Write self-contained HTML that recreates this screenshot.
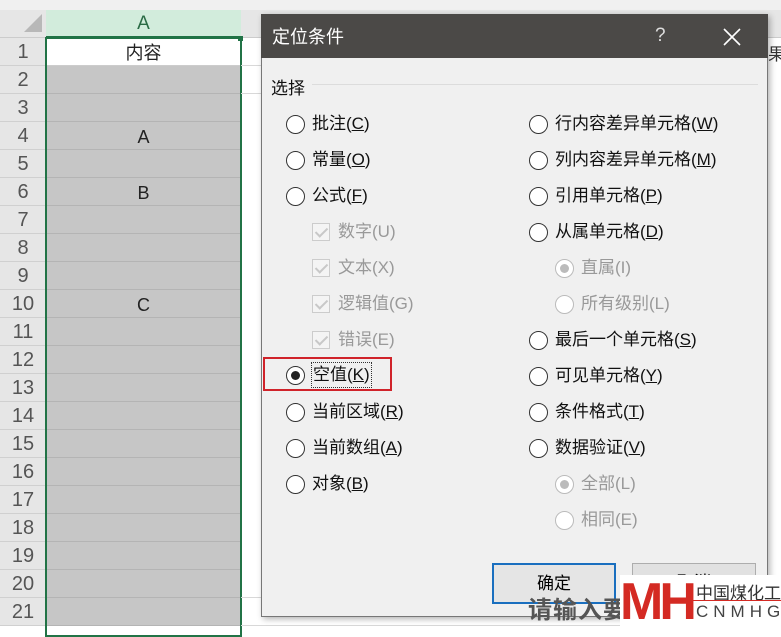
<!DOCTYPE html>
<html><head><meta charset="utf-8"><style>
*{margin:0;padding:0;box-sizing:border-box}
body{width:781px;height:628px;overflow:hidden;background:#fff;position:relative;font-family:"Liberation Sans","Microsoft YaHei","Noto Sans CJK SC",sans-serif}
.a{position:absolute}
.rh{position:absolute;left:0;width:46px;height:28px;background:#e6e6e6;border-bottom:1px solid #d0d0d0;color:#555;font-size:20px;text-align:center;line-height:29px}
.cell{position:absolute;left:46px;width:195px;height:28px;background:#c6c6c6;border-bottom:1px solid #b4b4b4;font-size:18px;text-align:center;line-height:30px;color:#222}
.gl{position:absolute;left:241px;width:540px;height:1px;background:#d8d8d8}
.opt{position:absolute;font-size:17px;color:#111;height:24px;line-height:24px;white-space:nowrap}
.opt i{position:absolute;left:0;top:3px;width:19px;height:19px;border:1px solid #333;border-radius:50%;background:#fff}
.opt span{position:absolute;left:26px;top:0}
.dis{color:#999}
.dis i{border-color:#bbb}
.chk{position:absolute;left:0;top:3px;width:18px;height:18px;border:1px solid #ccc;background:#f4f4f4}
.chk:after{content:"";position:absolute;left:5px;top:1px;width:5px;height:10px;border:solid #c8c8c8;border-width:0 2px 2px 0;transform:rotate(45deg)}
u{text-decoration:underline}
</style></head><body>
<div class="a" style="left:0;top:0;width:781px;height:38px;background:#e6e6e6;border-bottom:1px solid #ccc"></div>
<div class="a" style="left:46px;top:10px;width:195px;height:28px;background:#d2ecdc;color:#2a6b45;font-size:19px;text-align:center;line-height:28px;border-bottom:2px solid #217346">A</div>
<div class="a" style="left:0;top:0;width:781px;height:10px;background:#f0f0f0"></div>
<div class="a" style="left:24px;top:14px;width:0;height:0;border-left:18px solid transparent;border-bottom:18px solid #b8b8b8"></div>
<div class="rh" style="top:38px">1</div><div class="rh" style="top:66px">2</div><div class="rh" style="top:94px">3</div><div class="rh" style="top:122px">4</div><div class="rh" style="top:150px">5</div><div class="rh" style="top:178px">6</div><div class="rh" style="top:206px">7</div><div class="rh" style="top:234px">8</div><div class="rh" style="top:262px">9</div><div class="rh" style="top:290px">10</div><div class="rh" style="top:318px">11</div><div class="rh" style="top:346px">12</div><div class="rh" style="top:374px">13</div><div class="rh" style="top:402px">14</div><div class="rh" style="top:430px">15</div><div class="rh" style="top:458px">16</div><div class="rh" style="top:486px">17</div><div class="rh" style="top:514px">18</div><div class="rh" style="top:542px">19</div><div class="rh" style="top:570px">20</div><div class="rh" style="top:598px">21</div>
<div class="cell" style="top:38px;background:#fff;border-bottom:1px solid #ccc">内容</div>
<div class="cell" style="top:66px"></div><div class="cell" style="top:94px"></div><div class="cell" style="top:122px">A</div><div class="cell" style="top:150px"></div><div class="cell" style="top:178px">B</div><div class="cell" style="top:206px"></div><div class="cell" style="top:234px"></div><div class="cell" style="top:262px"></div><div class="cell" style="top:290px">C</div><div class="cell" style="top:318px"></div><div class="cell" style="top:346px"></div><div class="cell" style="top:374px"></div><div class="cell" style="top:402px"></div><div class="cell" style="top:430px"></div><div class="cell" style="top:458px"></div><div class="cell" style="top:486px"></div><div class="cell" style="top:514px"></div><div class="cell" style="top:542px"></div><div class="cell" style="top:570px"></div><div class="cell" style="top:598px"></div>
<div class="a" style="left:45px;top:37px;width:197px;height:600px;border:2px solid #217346"></div>
<div class="a" style="left:238px;top:36px;width:5px;height:5px;background:#217346"></div>
<div class="gl" style="top:65px"></div><div class="gl" style="top:93px"></div><div class="gl" style="top:597px"></div><div class="gl" style="top:625px"></div>
<div class="a" style="left:768px;top:38px;width:13px;height:590px;background:#fff"></div>
<div class="a" style="left:768px;top:40px;font-size:17px;color:#333">果</div>
<!-- dialog -->
<div class="a" style="left:261px;top:14px;width:507px;height:603px;background:#f0f0f0;border:1px solid #777;box-shadow:2px 2px 6px rgba(0,0,0,.3)"></div>
<div class="a" style="left:261px;top:14px;width:507px;height:44px;background:#4b4947;color:#fff;font-size:18px;line-height:46px;padding-left:11px">定位条件</div>
<div class="a" style="left:655px;top:25px;color:#ddd;font-size:19px">?</div>
<svg class="a" style="left:722px;top:27px" width="20" height="20"><path d="M2 2L18 18M18 2L2 18" stroke="#fff" stroke-width="1.6"/></svg>
<div class="a" style="left:271px;top:74px;font-size:17px;color:#111">选择</div>
<div class="a" style="left:312px;top:84px;width:446px;height:1px;background:#dcdcdc"></div>

<div class="opt" style="left:286px;top:112px"><i></i><span>批注(<u>C</u>)</span></div>
<div class="opt" style="left:286px;top:148px"><i></i><span>常量(<u>O</u>)</span></div>
<div class="opt" style="left:286px;top:184px"><i></i><span>公式(<u>F</u>)</span></div>
<div class="opt dis" style="left:312px;top:220px"><b class="chk"></b><span>数字(U)</span></div>
<div class="opt dis" style="left:312px;top:256px"><b class="chk"></b><span>文本(X)</span></div>
<div class="opt dis" style="left:312px;top:292px"><b class="chk"></b><span>逻辑值(G)</span></div>
<div class="opt dis" style="left:312px;top:328px"><b class="chk"></b><span>错误(E)</span></div>
<div class="a" style="left:263px;top:357px;width:129px;height:34px;border:2px solid #d0232a"></div>
<div class="opt" style="left:286px;top:363px"><i><b style="position:absolute;left:4px;top:4px;width:9px;height:9px;border-radius:50%;background:#222"></b></i><span style="outline:1px dotted #333;padding:0 1px">空值(<u>K</u>)</span></div>
<div class="opt" style="left:286px;top:400px"><i></i><span>当前区域(<u>R</u>)</span></div>
<div class="opt" style="left:286px;top:436px"><i></i><span>当前数组(<u>A</u>)</span></div>
<div class="opt" style="left:286px;top:472px"><i></i><span>对象(<u>B</u>)</span></div>

<div class="opt" style="left:529px;top:112px"><i></i><span>行内容差异单元格(<u>W</u>)</span></div>
<div class="opt" style="left:529px;top:148px"><i></i><span>列内容差异单元格(<u>M</u>)</span></div>
<div class="opt" style="left:529px;top:184px"><i></i><span>引用单元格(<u>P</u>)</span></div>
<div class="opt" style="left:529px;top:220px"><i></i><span>从属单元格(<u>D</u>)</span></div>
<div class="opt dis" style="left:555px;top:256px"><i><b style="position:absolute;left:4px;top:4px;width:9px;height:9px;border-radius:50%;background:#bbb"></b></i><span>直属(I)</span></div>
<div class="opt dis" style="left:555px;top:292px"><i></i><span>所有级别(L)</span></div>
<div class="opt" style="left:529px;top:328px"><i></i><span>最后一个单元格(<u>S</u>)</span></div>
<div class="opt" style="left:529px;top:364px"><i></i><span>可见单元格(<u>Y</u>)</span></div>
<div class="opt" style="left:529px;top:400px"><i></i><span>条件格式(<u>T</u>)</span></div>
<div class="opt" style="left:529px;top:436px"><i></i><span>数据验证(<u>V</u>)</span></div>
<div class="opt dis" style="left:555px;top:472px"><i><b style="position:absolute;left:4px;top:4px;width:9px;height:9px;border-radius:50%;background:#bbb"></b></i><span>全部(L)</span></div>
<div class="opt dis" style="left:555px;top:508px"><i></i><span>相同(E)</span></div>

<div class="a" style="left:492px;top:563px;width:124px;height:41px;border:2px solid #1a6fbf;background:#e5e5e5;font-size:17px;text-align:center;line-height:38px">确定</div>
<div class="a" style="left:632px;top:563px;width:124px;height:41px;border:1px solid #adadad;background:#e1e1e1;font-size:17px;text-align:center;line-height:38px">取消</div>
<div class="a" style="left:528px;top:590px;font-size:24px;font-weight:bold;color:#555;letter-spacing:1px">请输入要添加的</div>
<!-- logo -->
<div class="a" style="left:620px;top:575px;width:161px;height:53px;background:#fff"></div>
<div class="a" style="left:620px;top:577px;font-size:52px;font-weight:bold;color:#d42a23;line-height:50px;letter-spacing:-4px;font-family:'Liberation Sans',sans-serif">MH</div>
<div class="a" style="left:696px;top:579px;font-size:17px;color:#333">中国煤化工</div>
<div class="a" style="left:693px;top:600px;width:88px;height:1px;background:#d42a23"></div>
<div class="a" style="left:696px;top:602px;font-size:17px;color:#444;letter-spacing:5px">CNMHG</div>
</body></html>
